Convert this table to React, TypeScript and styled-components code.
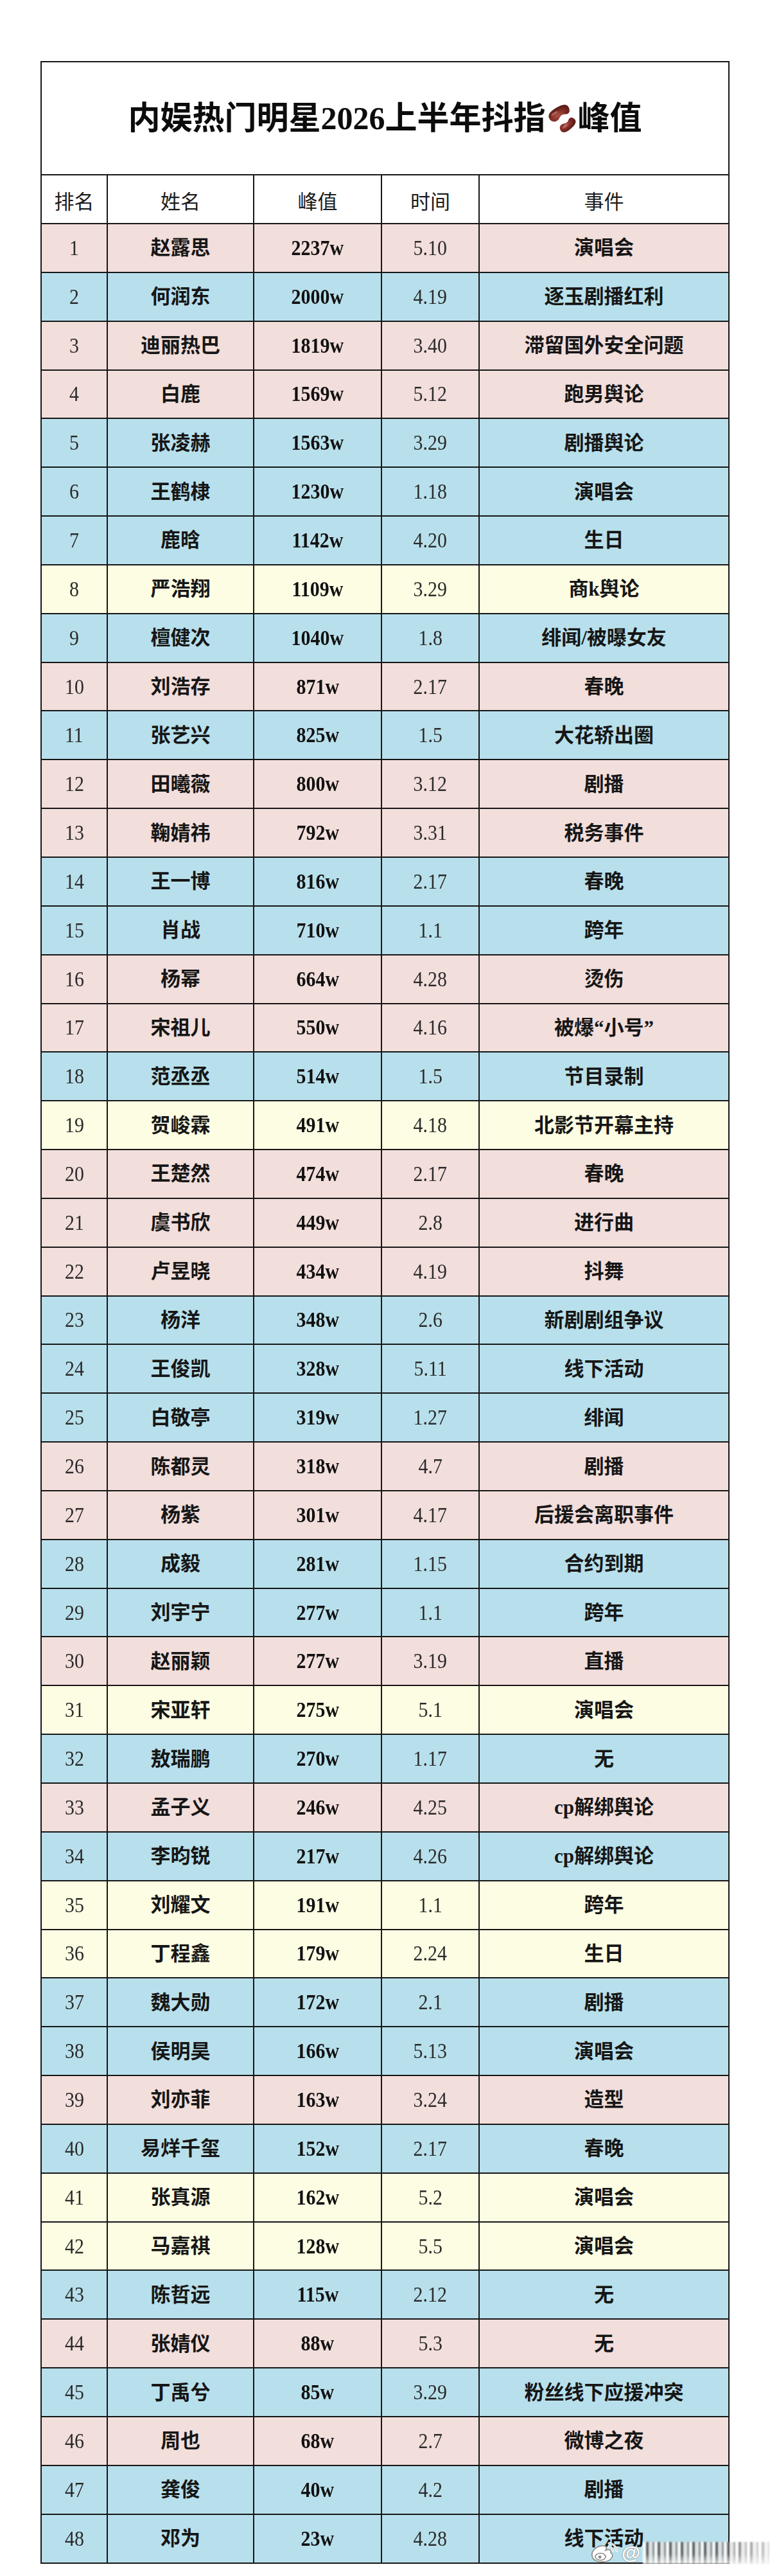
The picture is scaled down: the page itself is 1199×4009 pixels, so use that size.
import React from "react";
import styled, { createGlobalStyle } from "styled-components";

type Tone = "pink" | "blue" | "yellow";

interface Star {
  rank: number;
  name: string;
  peak: string;
  time: string;
  event: string;
  tone: Tone;
}

const tones: Record<Tone, string> = {
  pink: "#f2dedb",
  blue: "#b8e0ec",
  yellow: "#fdfde3",
};

const raw: [string, string, string, string, Tone][] = [
  ["赵露思", "2237w", "5.10", "演唱会", "pink"],
  ["何润东", "2000w", "4.19", "逐玉剧播红利", "blue"],
  ["迪丽热巴", "1819w", "3.40", "滞留国外安全问题", "pink"],
  ["白鹿", "1569w", "5.12", "跑男舆论", "pink"],
  ["张凌赫", "1563w", "3.29", "剧播舆论", "blue"],
  ["王鹤棣", "1230w", "1.18", "演唱会", "blue"],
  ["鹿晗", "1142w", "4.20", "生日", "blue"],
  ["严浩翔", "1109w", "3.29", "商k舆论", "yellow"],
  ["檀健次", "1040w", "1.8", "绯闻/被曝女友", "blue"],
  ["刘浩存", "871w", "2.17", "春晚", "pink"],
  ["张艺兴", "825w", "1.5", "大花轿出圈", "blue"],
  ["田曦薇", "800w", "3.12", "剧播", "pink"],
  ["鞠婧祎", "792w", "3.31", "税务事件", "pink"],
  ["王一博", "816w", "2.17", "春晚", "blue"],
  ["肖战", "710w", "1.1", "跨年", "blue"],
  ["杨幂", "664w", "4.28", "烫伤", "pink"],
  ["宋祖儿", "550w", "4.16", "被爆“小号”", "pink"],
  ["范丞丞", "514w", "1.5", "节目录制", "blue"],
  ["贺峻霖", "491w", "4.18", "北影节开幕主持", "yellow"],
  ["王楚然", "474w", "2.17", "春晚", "pink"],
  ["虞书欣", "449w", "2.8", "进行曲", "pink"],
  ["卢昱晓", "434w", "4.19", "抖舞", "pink"],
  ["杨洋", "348w", "2.6", "新剧剧组争议", "blue"],
  ["王俊凯", "328w", "5.11", "线下活动", "blue"],
  ["白敬亭", "319w", "1.27", "绯闻", "blue"],
  ["陈都灵", "318w", "4.7", "剧播", "pink"],
  ["杨紫", "301w", "4.17", "后援会离职事件", "pink"],
  ["成毅", "281w", "1.15", "合约到期", "blue"],
  ["刘宇宁", "277w", "1.1", "跨年", "blue"],
  ["赵丽颖", "277w", "3.19", "直播", "pink"],
  ["宋亚轩", "275w", "5.1", "演唱会", "yellow"],
  ["敖瑞鹏", "270w", "1.17", "无", "blue"],
  ["孟子义", "246w", "4.25", "cp解绑舆论", "pink"],
  ["李昀锐", "217w", "4.26", "cp解绑舆论", "blue"],
  ["刘耀文", "191w", "1.1", "跨年", "yellow"],
  ["丁程鑫", "179w", "2.24", "生日", "yellow"],
  ["魏大勋", "172w", "2.1", "剧播", "blue"],
  ["侯明昊", "166w", "5.13", "演唱会", "blue"],
  ["刘亦菲", "163w", "3.24", "造型", "pink"],
  ["易烊千玺", "152w", "2.17", "春晚", "blue"],
  ["张真源", "162w", "5.2", "演唱会", "yellow"],
  ["马嘉祺", "128w", "5.5", "演唱会", "yellow"],
  ["陈哲远", "115w", "2.12", "无", "blue"],
  ["张婧仪", "88w", "5.3", "无", "pink"],
  ["丁禹兮", "85w", "3.29", "粉丝线下应援冲突", "blue"],
  ["周也", "68w", "2.7", "微博之夜", "pink"],
  ["龚俊", "40w", "4.2", "剧播", "blue"],
  ["邓为", "23w", "4.28", "线下活动", "blue"],
];

const stars: Star[] = raw.map(([name, peak, time, event, tone], i) => ({
  rank: i + 1,
  name,
  peak,
  time,
  event,
  tone,
}));

const GlobalStyle = createGlobalStyle`
  html, body {
    margin: 0;
    padding: 0;
    background: #ffffff;
  }
  body {
    font-family: "Liberation Serif", "Noto Sans CJK SC", serif;
    color: #141414;
  }
`;

const Page = styled.div`
  position: relative;
  width: 1199px;
  padding: 95px 0 19px 63px;
  box-sizing: border-box;
`;

const Table = styled.div`
  width: 1073px;
  box-sizing: border-box;
  padding: 2px;
  display: flex;
  flex-direction: column;
  gap: 2px;
  background: #161616;
`;

const TitleCell = styled.div`
  height: 174px;
  background: #ffffff;
  display: flex;
  align-items: center;
  justify-content: center;
  font-family: "Liberation Serif", "Noto Sans CJK SC", serif;
  font-weight: 700;
  font-size: 50px;
  line-height: 1;
  color: #0c0c0c;
`;

const Bean = styled.svg`
  width: 48px;
  height: 48px;
  margin: 0 1px;
  flex-shrink: 0;
`;

const Row = styled.div<{ $bg: string; $height: string }>`
  display: grid;
  grid-template-columns: 101px 226px 197px 150px 1fr;
  gap: 2px;
  height: ${(p) => p.$height};

  & > div {
    background: ${(p) => p.$bg};
  }
`;

const Cell = styled.div`
  display: flex;
  align-items: center;
  justify-content: center;
  line-height: 1;
  overflow: hidden;
  white-space: nowrap;
`;

const HeadCell = styled(Cell)`
  font-family: "Noto Sans CJK SC", sans-serif;
  font-weight: 400;
  font-size: 31px;
  color: #1c1c1c;
  padding-top: 2px;
`;

const TextCell = styled(Cell)`
  font-family: "Liberation Serif", "Noto Sans CJK SC", serif;
  font-weight: 700;
  font-size: 31px;
  color: #161616;
`;

const NumCell = styled(Cell)`
  font-family: "Liberation Serif", serif;
`;

const Num = styled.span<{ $bold?: boolean }>`
  display: inline-block;
  font-size: 34px;
  font-weight: ${(p) => (p.$bold ? 700 : 400)};
  color: ${(p) => (p.$bold ? "#111" : "#2a2a2a")};
  transform: scaleX(0.88);
`;

const Watermark = styled.div`
  position: absolute;
  left: 918px;
  top: 3956px;
  display: flex;
  align-items: center;
  gap: 4px;
  pointer-events: none;
`;

const At = styled.span`
  font-family: "Liberation Sans", sans-serif;
  font-size: 30px;
  font-weight: 700;
  color: #ffffff;
  text-shadow: 0 0 1px #777, 0 0 2px #999;
`;

const Mosaic = styled.div`
  width: 197px;
  height: 34px;
  filter: blur(0.8px);
  background:
    linear-gradient(180deg, rgba(255, 255, 255, 0) 0%, rgba(255, 255, 255, 0) 55%, rgba(250, 250, 250, 0.75) 100%),
    linear-gradient(90deg, rgba(255, 255, 255, 0) 0%, rgba(255, 255, 255, 0) 60%, rgba(255, 255, 255, 0.65) 100%),
    repeating-linear-gradient(
      90deg,
      rgba(250, 250, 250, 0.95) 0 5px,
      rgba(70, 70, 70, 0.8) 5px 9px,
      rgba(225, 225, 225, 0.9) 9px 15px,
      rgba(120, 120, 120, 0.75) 15px 18px
    );
`;

const beanPath =
  "M -17 0 C -17 -8 -9 -11 -3 -7 C 1 -4.5 4 -4.5 8 -7 C 14 -11 18 -5 18 0 C 18 7 10 9 0 9 C -10 9 -17 7 -17 0 Z";

const BeanIcon = () => (
  <Bean viewBox="0 0 48 48">
    <defs>
      <radialGradient id="beanFill" cx="40%" cy="35%" r="75%">
        <stop offset="0" stopColor="#b05249" />
        <stop offset="0.5" stopColor="#7e2b25" />
        <stop offset="1" stopColor="#4a1310" />
      </radialGradient>
    </defs>
    <g transform="translate(19 16) rotate(-32) scale(1 -1)">
      <path d={beanPath} fill="url(#beanFill)" />
      <ellipse cx="-6" cy="3" rx="6" ry="2" fill="#f2c0b8" opacity="0.35" />
    </g>
    <g transform="translate(33 35) rotate(-40) scale(0.8)">
      <path d={beanPath} fill="url(#beanFill)" />
      <ellipse cx="-5" cy="-2" rx="6" ry="2" fill="#f2c0b8" opacity="0.3" />
    </g>
  </Bean>
);

const WeiboLogo = () => (
  <svg width="46" height="34" viewBox="0 0 46 34">
    <path
      d="M4 22 C2 14 12 5 22 6 C27 6.5 27 10 25 13 C30 11 34 12 33 17 C38 19 37 29 22 31 C12 32 5 28 4 22 Z"
      fill="#ffffff"
      stroke="#8a8a8a"
      strokeWidth="1.6"
    />
    <ellipse cx="17" cy="23" rx="8" ry="5.5" fill="none" stroke="#888" strokeWidth="1.6" />
    <circle cx="16" cy="23.5" r="2.4" fill="#8a8a8a" />
    <path d="M30 2 A12 12 0 0 1 42 14" fill="none" stroke="#ffffff" strokeWidth="3.2" strokeLinecap="round" />
    <path d="M30 2 A12 12 0 0 1 42 14" fill="none" stroke="#9a9a9a" strokeWidth="0.8" />
    <path d="M30 7.5 A6 6 0 0 1 36 13.5" fill="none" stroke="#ffffff" strokeWidth="3" strokeLinecap="round" />
    <path d="M30 7.5 A6 6 0 0 1 36 13.5" fill="none" stroke="#9a9a9a" strokeWidth="0.8" />
  </svg>
);

const App = () => {
  return (
    <Page>
      <GlobalStyle />
      <Table>
        <TitleCell>
          内娱热门明星2026上半年抖指
          <BeanIcon />
          峰值
        </TitleCell>
        <Row $bg="#ffffff" $height="74px">
          <HeadCell>排名</HeadCell>
          <HeadCell>姓名</HeadCell>
          <HeadCell>峰值</HeadCell>
          <HeadCell>时间</HeadCell>
          <HeadCell>事件</HeadCell>
        </Row>
        {stars.map((s) => (
          <Row key={s.rank} $bg={tones[s.tone]} $height="73.85px">
            <NumCell>
              <Num>{s.rank}</Num>
            </NumCell>
            <TextCell>{s.name}</TextCell>
            <NumCell>
              <Num $bold>{s.peak}</Num>
            </NumCell>
            <NumCell>
              <Num>{s.time}</Num>
            </NumCell>
            <TextCell>{s.event}</TextCell>
          </Row>
        ))}
      </Table>
      <Watermark>
        <WeiboLogo />
        <At>@</At>
        <Mosaic />
      </Watermark>
    </Page>
  );
};

export default App;
